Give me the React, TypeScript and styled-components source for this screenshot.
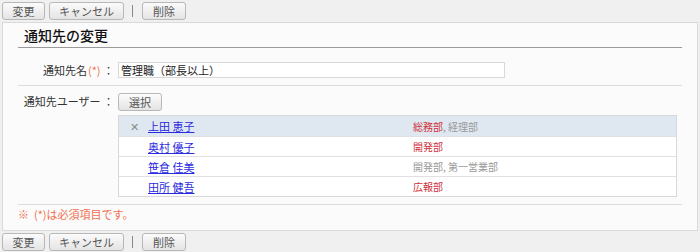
import React from "react";
import styled, { createGlobalStyle } from "styled-components";

const Global = createGlobalStyle`
  html, body { margin: 0; padding: 0; background: #f0f0f0; }
  body { font-family: "Noto Sans CJK JP", "Noto Sans", sans-serif; font-size: 11px; color: #333; }
`;

const Toolbar = styled.div`
  display: flex;
  align-items: center;
  height: 22px;
  padding: 0 2px;
  gap: 4px;
`;

const Button = styled.button<{ $w: number }>`
  width: ${(p) => p.$w}px;
  height: 18px;
  padding: 0;
  font-family: inherit;
  font-size: 11px;
  line-height: 16px;
  color: #555;
  border: 1px solid #b8b8b8;
  border-radius: 3px;
  background: linear-gradient(#fbfbfb, #e4e4e4);
  cursor: pointer;
`;

const Divider = styled.span`
  width: 1px;
  height: 12px;
  background: #888;
  margin: 0 5px 0 4px;
`;

const Panel = styled.div`
  margin: 0 2px;
  border: 1px solid #dadada;
  background: #fbfbfb;
  padding: 0 15px;
`;

const Heading = styled.h2`
  margin: 0;
  height: 24px;
  padding: 0 0 0 6px;
  font-size: 14px;
  font-weight: 500;
  line-height: 24px;
  color: #111;
  border-bottom: 1px solid #9a9a9a;
`;

const FormRow = styled.div<{ $pt: number; $pb: number }>`
  display: flex;
  align-items: flex-start;
  padding: ${(p) => p.$pt}px 0 ${(p) => p.$pb}px;
  border-bottom: 1px solid #dcdcdc;
`;

const Label = styled.div`
  width: 96px;
  flex: none;
  text-align: right;
  line-height: 16px;
  color: #333;
  padding-right: 4px;
`;

const Req = styled.span`
  color: #f07050;
  margin-left: 1px;
`;

const Field = styled.div`
  display: flex;
  flex-direction: column;
  gap: 4px;
`;

const TextInput = styled.input`
  width: 387px;
  height: 16px;
  box-sizing: border-box;
  border: 1px solid #d8d8d8;
  background: #fff;
  padding: 0 2px;
  font-family: inherit;
  font-size: 11px;
  color: #222;
  outline: none;
`;

const Table = styled.div`
  width: 557px;
  border: 1px solid #d8d8d8;
  background: #fff;
`;

const Row = styled.div<{ $hl?: boolean }>`
  display: grid;
  grid-template-columns: 29px 265px 1fr;
  align-items: center;
  box-sizing: border-box;
  height: 20px;
  background: ${(p) => (p.$hl ? "#dfe8f1" : "#fff")};
  & + & {
    border-top: 1px solid #e0e0e0;
  }
`;

const Remove = styled.span`
  text-align: center;
  color: #888;
  font-size: 11px;
  padding-left: 2px;
`;

const Name = styled.a`
  color: #2a2ae0;
  text-decoration: underline;
  font-size: 11px;
`;

const Dept = styled.span`
  font-size: 10px;
  color: #999;
`;

const Main = styled.span`
  color: #d0303a;
`;

const Note = styled.div`
  height: 25px;
  line-height: 18px;
  color: #f07050;
  font-size: 11px;
  white-space: pre;
`;

const users = [
  { name: "上田 恵子", main: "総務部", rest: ", 経理部", hl: true },
  { name: "奥村 優子", main: "開発部", rest: "", hl: false },
  { name: "笹倉 佳美", main: "", rest: "開発部, 第一営業部", hl: false },
  { name: "田所 健吾", main: "広報部", rest: "", hl: false },
];

function Buttons() {
  return (
    <Toolbar>
      <Button $w={43}>変更</Button>
      <Button $w={75}>キャンセル</Button>
      <Divider />
      <Button $w={44}>削除</Button>
    </Toolbar>
  );
}

export default function App() {
  return (
    <>
      <Global />
      <Buttons />
      <Panel>
        <Heading>通知先の変更</Heading>
        <FormRow $pt={14} $pb={7}>
          <Label>
            通知先名<Req>(*)</Req> ：
          </Label>
          <TextInput defaultValue="管理職（部長以上）" />
        </FormRow>
        <FormRow $pt={7} $pb={7}>
          <Label>通知先ユーザー ：</Label>
          <Field>
            <Button $w={44}>選択</Button>
            <Table>
              {users.map((u) => (
                <Row key={u.name} $hl={u.hl}>
                  <Remove>{u.hl ? "✕" : ""}</Remove>
                  <span>
                    <Name href="#">{u.name}</Name>
                  </span>
                  <Dept>
                    {u.main && <Main>{u.main}</Main>}
                    {u.rest}
                  </Dept>
                </Row>
              ))}
            </Table>
          </Field>
        </FormRow>
        <Note>{"※  (*)は必須項目です。"}</Note>
      </Panel>
      <Buttons />
    </>
  );
}
